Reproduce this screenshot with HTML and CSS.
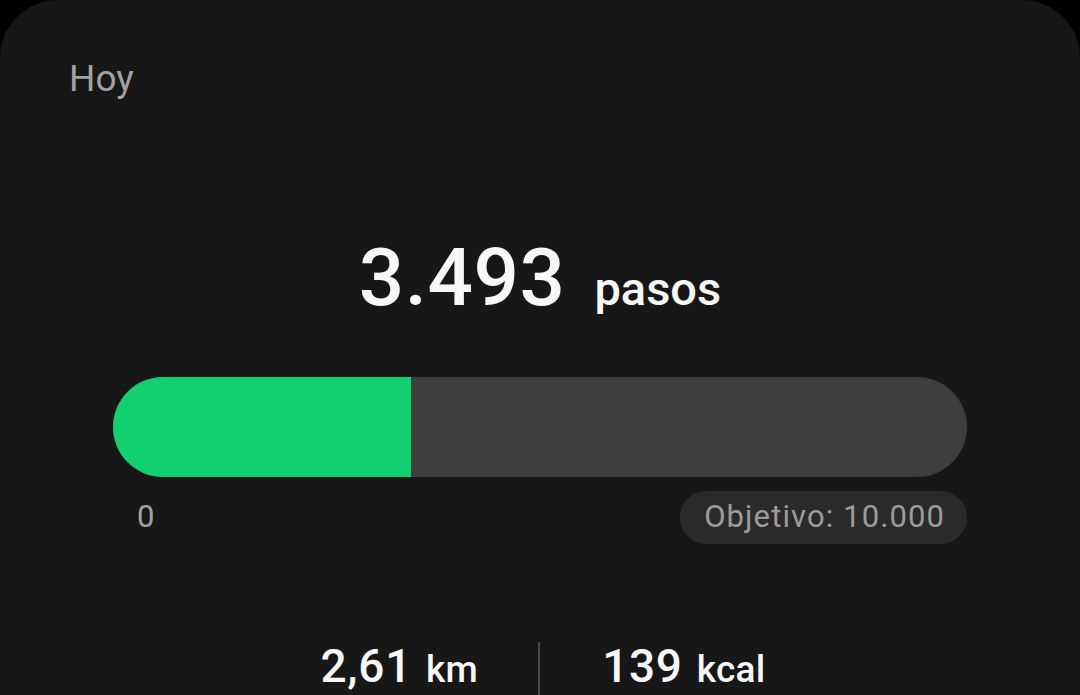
FILE: index.html
```html
<!DOCTYPE html>
<html lang="es">

<head>
    <meta charset="UTF-8">
    <meta name="viewport" content="width=device-width, initial-scale=1.0">
    <title>Pasos</title>
    <link rel="stylesheet" href="styles.css">
</head>

<body>

    <div class="card">
        <h2 class="day">Hoy</h2>

        <div class="steps">
            <span class="steps-count">3.493</span>
            <span class="steps-unit">pasos</span>
        </div>

        <div class="bar">
            <div class="bar-fill" style="width: 34.93%"></div>
        </div>

        <div class="labels">
            <span class="label">0</span>
            <span class="label goal">Objetivo: 10.000</span>
        </div>

        <div class="stats">
            <p class="stat">2,61<span class="unit">km</span></p>
            <div class="divider"></div>
            <p class="stat">139<span class="unit">kcal</span></p>
        </div>
    </div>

</body>

</html>
```

FILE: styles.css
```css
html,
body {
    height: 100%;
}

body {
    margin: 0;
    padding: 0;
    background: #000;
    font-family: Roboto, 'Liberation Sans', sans-serif;
    overflow: hidden;
}

.card {
    background: #171717;
    border-radius: 58px 58px 0 0;
    min-height: 100%;
    padding: 57px 113px 0;
    box-sizing: border-box;
}

.day {
    margin: 0 0 0 -44px;
    font-size: 37px;
    line-height: 44px;
    font-weight: 400;
    color: #a2a2a2;
}

.steps {
    display: flex;
    align-items: baseline;
    justify-content: center;
    gap: 29px;
    margin-top: 137px;
    color: #f7f7f7;
    font-weight: 500;
}

.steps-count {
    font-size: 80px;
    line-height: 80px;
    letter-spacing: 0.5px;
}

.steps-unit {
    font-size: 47px;
    line-height: 48px;
}

.bar {
    margin-top: 59px;
    height: 100px;
    border-radius: 50px;
    background: #3e3e3e;
    overflow: hidden;
}

.bar-fill {
    height: 100%;
    background: #12cf6f;
}

.labels {
    display: flex;
    justify-content: space-between;
    margin-top: 14px;
}

.label {
    font-size: 31px;
    line-height: 37px;
    letter-spacing: 1.1px;
    padding: 7px 22px 9px 24px;
    border-radius: 27px;
    color: #a4a4a4;
}

.goal {
    background: #2a2a2a;
    color: #9c9c9c;
}

.stats {
    display: flex;
    justify-content: center;
    align-items: flex-start;
    margin: 98px 0 0 6px;
}

.stat {
    margin: 0;
    font-size: 46px;
    line-height: 48px;
    font-weight: 500;
    letter-spacing: 0.7px;
    color: #f7f7f7;
}

.unit {
    font-size: 37px;
    margin-left: 14px;
    letter-spacing: 0.3px;
}

.divider {
    width: 2px;
    height: 80px;
    margin: 0 62px 0 60px;
    background: #4a4a4a;
}
```
